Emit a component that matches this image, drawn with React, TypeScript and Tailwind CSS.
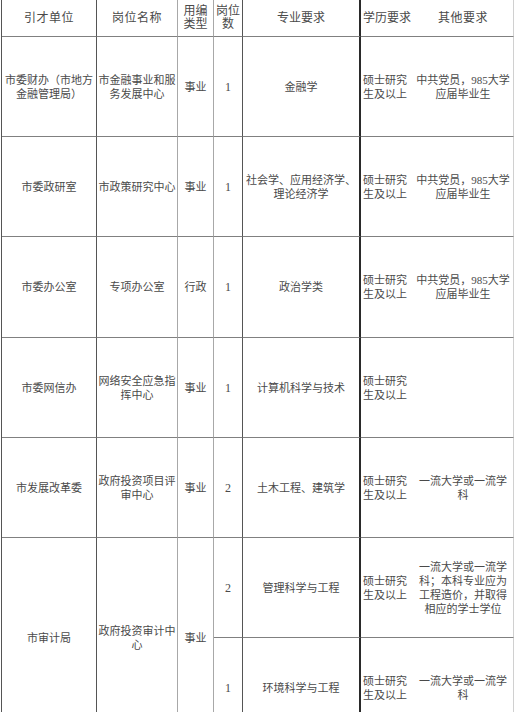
import React from 'react'

type Line = string[]

const font = { fontFamily: '"Liberation Serif", "Noto Sans CJK SC", serif' }

const rows: { unit: Line; post: Line; kind: string; count: string; major: Line; edu: Line; other: Line; h: string }[] = [
    {
        unit: ['市委财办（市地方', '金融管理局）'],
        post: ['市金融事业和服', '务发展中心'],
        kind: '事业',
        count: '1',
        major: ['金融学'],
        edu: ['硕士研究', '生及以上'],
        other: ['中共党员，985大学', '应届毕业生'],
        h: 'h-[100px]',
    },
    {
        unit: ['市委政研室'],
        post: ['市政策研究中心'],
        kind: '事业',
        count: '1',
        major: ['社会学、应用经济学、', '理论经济学'],
        edu: ['硕士研究', '生及以上'],
        other: ['中共党员，985大学', '应届毕业生'],
        h: 'h-[100px]',
    },
    {
        unit: ['市委办公室'],
        post: ['专项办公室'],
        kind: '行政',
        count: '1',
        major: ['政治学类'],
        edu: ['硕士研究', '生及以上'],
        other: ['中共党员，985大学', '应届毕业生'],
        h: 'h-[101px]',
    },
    {
        unit: ['市委网信办'],
        post: ['网络安全应急指', '挥中心'],
        kind: '事业',
        count: '1',
        major: ['计算机科学与技术'],
        edu: ['硕士研究', '生及以上'],
        other: [],
        h: 'h-[100px]',
    },
    {
        unit: ['市发展改革委'],
        post: ['政府投资项目评', '审中心'],
        kind: '事业',
        count: '2',
        major: ['土木工程、建筑学'],
        edu: ['硕士研究', '生及以上'],
        other: ['一流大学或一流学', '科'],
        h: 'h-[100px]',
    },
]

function Lines({ lines, left }: { lines: Line; left?: boolean }) {
    return (
        <div className={left ? 'text-left' : 'text-center'}>
            {lines.map((l, i) => (
                <div key={i} className="whitespace-nowrap">
                    {l}
                </div>
            ))}
        </div>
    )
}

const base = 'flex items-center border-b border-b-[#808080] overflow-hidden'
const c1 = `${base} justify-center border-r border-r-[#555]`
const c2 = `${base} justify-center border-r border-r-[#a8a8a8]`
const c3 = `${base} justify-center border-r border-r-[#a8a8a8]`
const c4 = `${base} justify-center border-r border-r-[#555] text-[12px]`
const c5 = `${base} justify-center border-r-2 border-r-[#2a2a2a]`
const c6 = `${base} justify-start pl-[2px]`
const c7 = `${base} justify-center border-r border-r-[#d0d0d0]`

export default function App() {
    return (
        <div className="w-[514px] h-[712px] overflow-hidden bg-white">
            <div
                className="ml-[1px] w-[513px] border-l border-l-[#555] grid grid-cols-[95px_81px_36px_29px_118px_52px_101px] text-[11px] leading-[14px] text-[#4a4a4a]"
                style={font}
            >
                {/* header */}
                <div className={`${c1} h-[37px] text-[12px] tracking-[0.5px]`}>引才单位</div>
                <div className={`${c2} h-[37px] text-[12px] tracking-[0.5px]`}>岗位名称</div>
                <div className={`${c3} h-[37px] text-[12px] leading-[13px]`}>
                    <Lines lines={['用编', '类型']} />
                </div>
                <div className={`${c4} h-[37px] leading-[13px]`}>
                    <Lines lines={['岗位', '数']} />
                </div>
                <div className={`${c5} h-[37px] text-[12px]`}>专业要求</div>
                <div className={`${c6} h-[37px] text-[12px]`}>学历要求</div>
                <div className={`${c7} h-[37px] text-[12px] tracking-[0.5px]`}>其他要求</div>

                {rows.map((r, i) => (
                    <React.Fragment key={i}>
                        <div className={`${c1} ${r.h}`}>
                            <Lines lines={r.unit} />
                        </div>
                        <div className={`${c2} ${r.h}`}>
                            <Lines lines={r.post} />
                        </div>
                        <div className={`${c3} ${r.h}`}>{r.kind}</div>
                        <div className={`${c4} ${r.h}`}>{r.count}</div>
                        <div className={`${c5} ${r.h}`}>
                            <Lines lines={r.major} />
                        </div>
                        <div className={`${c6} ${r.h}`}>
                            <Lines lines={r.edu} left />
                        </div>
                        <div className={`${c7} ${r.h}`}>
                            <Lines lines={r.other} />
                        </div>
                    </React.Fragment>
                ))}

                {/* 市审计局: two posts */}
                <div className={`${c1} row-span-2 h-[200px]`}>市审计局</div>
                <div className={`${c2} row-span-2 h-[200px]`}>
                    <Lines lines={['政府投资审计中', '心']} />
                </div>
                <div className={`${c3} row-span-2 h-[200px]`}>事业</div>
                <div className={`${c4} h-[100px]`}>2</div>
                <div className={`${c5} h-[100px]`}>管理科学与工程</div>
                <div className={`${c6} h-[100px]`}>
                    <Lines lines={['硕士研究', '生及以上']} left />
                </div>
                <div className={`${c7} h-[100px]`}>
                    <Lines lines={['一流大学或一流学', '科；本科专业应为', '工程造价，并取得', '相应的学士学位']} />
                </div>
                <div className={`${c4} h-[100px]`}>1</div>
                <div className={`${c5} h-[100px]`}>环境科学与工程</div>
                <div className={`${c6} h-[100px]`}>
                    <Lines lines={['硕士研究', '生及以上']} left />
                </div>
                <div className={`${c7} h-[100px]`}>
                    <Lines lines={['一流大学或一流学', '科']} />
                </div>
            </div>
        </div>
    )
}
